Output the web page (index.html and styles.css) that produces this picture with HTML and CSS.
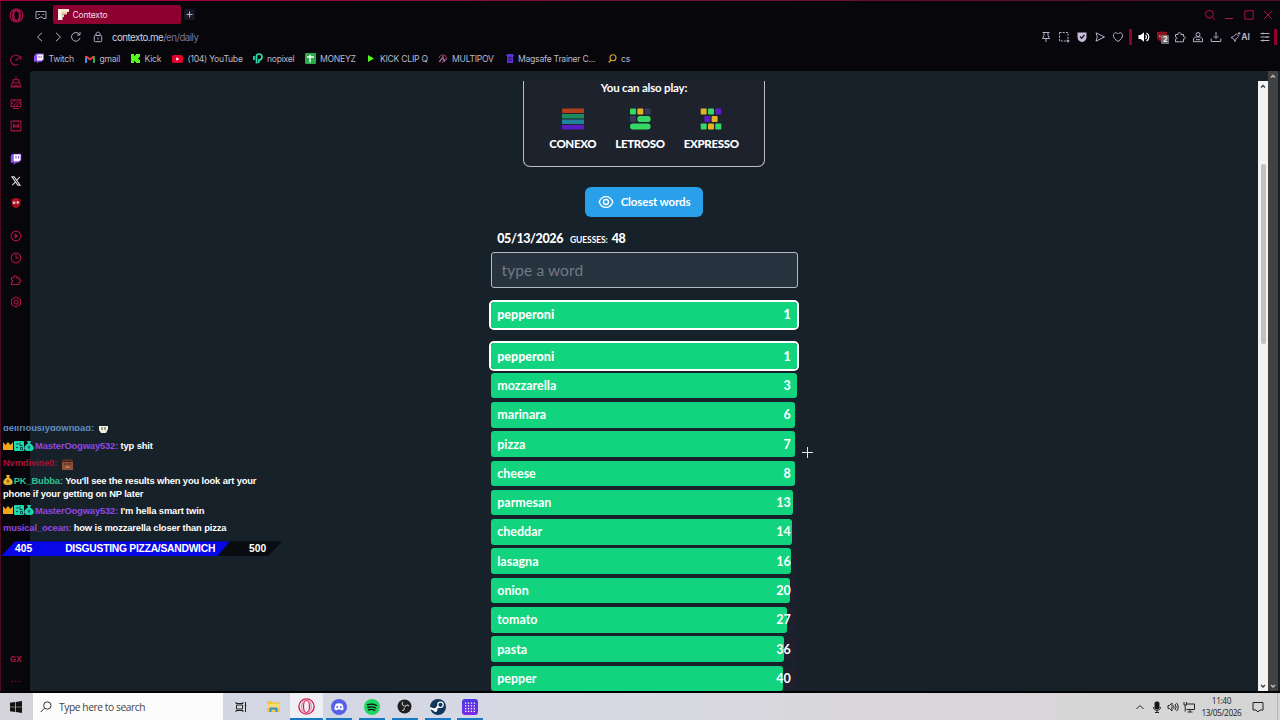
FILE: index.html
```
<!DOCTYPE html>
<html lang="en">
<head>
    <meta charset="UTF-8">
    <meta name="viewport" content="width=device-width, initial-scale=1.0">
    <title>Contexto</title>
    <link rel="stylesheet" href="styles.css">
</head>
<body>

    <div class="browser">
        <div class="sidebar">
            <div class="side-logo">
                <svg class="red" width="15" height="15" viewBox="0 0 16 16"><circle cx="8" cy="8" r="6.8"/><ellipse cx="8" cy="8" rx="3" ry="5.2"/><path d="M6 2.5C3 5 3 11 6 13.5M10 2.5c3 2.500 3 8.500 0 11"/></svg>
            </div>
            <div class="side-group">
                <svg class="red" viewBox="0 0 16 16"><path d="M11.500 3A6.500 6.500 0 1 0 11 13.500M7.500 8.500L13 4.500M12 2.500l2.500 1.500v4"/></svg>
                <svg class="red" viewBox="0 0 16 16"><path d="M8 1v4M4 5h8v4H4zM3 9h10l1.500 5.500H1.500zM5.500 12v2.500M8 11v3.500M10.500 12v2.500"/></svg>
                <svg class="red" viewBox="0 0 16 16"><rect x="1.500" y="2.500" width="13" height="9"/><path d="M2 8l5-5M4 11l8-8M8 11l6-6M4 14h8"/></svg>
                <svg class="red" viewBox="0 0 16 16"><rect x="1.500" y="1.500" width="13" height="13" rx="1"/><path d="M5 11V6l3 3 3-3v5" stroke-width="1.700"/></svg>
            </div>
            <div class="side-group second">
                <svg viewBox="0 0 16 16"><path d="M3 1h12v9l-4 3H8l-3 3v-3H1V4z" fill="#8a4df0"/><path d="M5 2h9v7l-2.500 2H5z" fill="#fff"/><path d="M8 4v3.500M11.500 4v3.500" stroke="#7038c8" stroke-width="1.300"/></svg>
                <svg viewBox="0 0 16 16" fill="none" stroke="#d8d8dc"><path d="M2.500 2.500h3l8 11h-3zM13 2.500L9 7M7 9.500l-4 4" stroke-width="1.400"/></svg>
                <svg viewBox="0 0 16 16"><path d="M8 1l6 2v5c0 4-3 6-6 7-3-1-6-3-6-7V3z" fill="#a80f1c"/><path d="M4.500 6v2.500h2V6M9.500 6v2.500c3 0 3-2.500 0-2.500" fill="none" stroke="#fff" stroke-width="1.200"/></svg>
            </div>
            <div class="side-group third">
                <svg class="red" viewBox="0 0 16 16"><circle cx="8" cy="8" r="6.500"/><path d="M6.800 5.800v4.400L10 8z" fill="#b01345"/></svg>
                <svg class="red" viewBox="0 0 16 16"><circle cx="8" cy="8" r="6.500"/><path d="M8 3.500V8h3.500"/></svg>
                <svg class="red" viewBox="0 0 16 16"><path d="M2 5h3.500C4 1.500 10 1.500 9 5h3v2.500c3.500 0 3.500 3.500 0 3.500v3H2v-3c2.500 0 2.500-3 0-3z"/></svg>
                <svg class="red" viewBox="0 0 16 16"><path d="M8 1.200l6 3.400v6.800l-6 3.400-6-3.400V4.600z"/><circle cx="8" cy="8" r="2.800"/></svg>
            </div>
            <div class="side-bottom">
                <span class="gx">GX</span>
                <span class="dots">...</span>
            </div>
        </div>

        <div class="main">
            <div class="tab-strip">
                <svg class="pad" width="12" height="10" viewBox="0 0 12 10"><path d="M1 1.500h10v7H8.200L7 7H5L3.800 8.500H1z"/><path d="M3 4.500h1.500M7.500 4.500H9"/></svg>
                <div class="tab">
                    <svg width="11" height="11" viewBox="0 0 11 11"><path d="M0 0h11v3H0z" fill="#f5ead0"/><path d="M0 3h9v2.500H0z" fill="#f3c9a4"/><path d="M0 5.500h6V8H0z" fill="#bfe6cf"/><path d="M0 0h3.500v11H0zM0 8h4.500v3H0z" fill="#fbf3e5"/></svg>
                    Contexto
                </div>
                <div class="new-tab"><svg width="11" height="11" viewBox="0 0 11 11"><path d="M5.500 2.500v6M2.500 5.500h6" stroke="#b9b3cc"/></svg></div>
                <div class="window-buttons">
                    <svg class="red" viewBox="0 0 12 12"><circle cx="5.500" cy="5.300" r="3.900"/><path d="M8.300 8.200l3 3"/></svg>
                    <svg class="red" viewBox="0 0 12 12"><path d="M2 9.500h8"/></svg>
                    <svg class="red" viewBox="0 0 12 12"><path d="M1.800 1.800h8.400v8.400H1.800z"/></svg>
                    <svg class="red" viewBox="0 0 12 12"><path d="M2 2l8 8M10 2l-8 8"/></svg>
                </div>
            </div>

            <div class="address-bar">
                <svg viewBox="0 0 12 12"><path d="M8 1.800L3.500 6 8 10.200"/></svg>
                <svg viewBox="0 0 12 12"><path d="M4 1.800L8.500 6 4 10.200"/></svg>
                <svg viewBox="0 0 12 12"><path d="M9.300 3.300A4.300 4.300 0 1 0 10 7M10 1v3H7"/></svg>
                <svg class="lock" viewBox="0 0 12 12"><rect x="2.300" y="4.500" width="7.400" height="6.200" rx="1"/><path d="M4 4.500V3c0-2.400 4-2.400 4 0v1.500M6 6.500v2"/></svg>
                <div class="url">contexto.me<span>/en/daily</span></div>
                <div class="tools">
                    <svg viewBox="0 0 12 12"><path d="M2.500 1.500h7M4 1.500v3L2.500 7.500h7L8 4.500v-3M6 7.500V11"/></svg>
                    <svg viewBox="0 0 12 12"><path d="M1.500 1.500h8.500v8.500H1.500z" stroke-dasharray="2 1.200"/><path d="M10 8.500v3M8.500 10h3"/></svg>
                    <svg viewBox="0 0 12 12"><path d="M1.500 1.500h9V6c0 3-2 4.500-4.500 5C3.500 10.500 1.500 9 1.500 6z" fill="#c6bcdc" stroke="none"/><path d="M4 5.500l1.700 1.800L8.500 4" stroke="#17131f" stroke-width="1.300"/></svg>
                    <svg viewBox="0 0 12 12"><path d="M2 1.800L10.500 6 2 10.200 3.300 6z"/></svg>
                    <svg viewBox="0 0 12 12"><path d="M6 10.500C-1 6 1.500 1.500 4 1.800c1.200.1 2 1.200 2 1.200s.8-1.100 2-1.200c2.500-.3 5 4.200-2 8.700z"/></svg>
                    <span class="divider"></span>
                    <svg class="sound" viewBox="0 0 12 12"><path d="M.5 4h2.200L6 1.200v9.600L2.700 8H.5z" fill="#fff" stroke="none"/><path d="M7.500 4c1.300 1.200 1.300 2.800 0 4M8.500 2c3.200 2 3.200 6 0 8" stroke="#fff" stroke-width="1.200"/></svg>
                    <div class="blocker">
                        <svg viewBox="0 0 12 12"><path d="M1 1l5-.5L11 1v5c0 3-3 4-5 5-2-1-5-2-5-5z" fill="#8d1020" stroke="none"/><path d="M3.500 4v2h1.700V4M7 4v2h1.500" stroke="#c96a6a"/></svg>
                        <span class="badge">2</span>
                    </div>
                    <svg viewBox="0 0 12 12"><path d="M1.500 3.500H4C3 1 7.800 1 7 3.500h2.500v2c2.500 0 2.500 2.500 0 2.500v2.800h-8V8.200c2 0 2-2.200 0-2.200z"/></svg>
                    <svg viewBox="0 0 12 12"><circle cx="6" cy="3.500" r="2"/><path d="M3.500 6h5l2 2v2.700h-9V8zM4 8.700h4"/></svg>
                    <svg viewBox="0 0 12 12"><path d="M6 1v6M3.500 5L6 7.500 8.500 5M1.200 7.500v3h9.600v-3"/></svg>
                    <div class="ai"><svg viewBox="0 0 12 12"><path d="M1 6.500l3-1 3-3L9.500 5l-3 3-1 3L4 8zM10 .5v3M8.500 2h3"/></svg>AI</div>
                    <svg class="menu" viewBox="0 0 12 12"><path d="M1.500 2.500h9M1.500 6h9M1.500 9.500h9M4 1.500v2M8 5v2M4 8.500v2"/></svg>
                    <span class="divider last"></span>
                </div>
            </div>

            <div class="bookmarks">
                <a><svg width="10" height="11" viewBox="0 0 16 16"><path d="M3 0h13v10l-4 3H8l-3 3v-3H0V4z" fill="#8a4df0"/><path d="M5 1.500h9.500V9l-2.500 2H5z" fill="#fff"/><path d="M8 4v3.500M11.500 4v3.500" stroke="#7038c8" stroke-width="1.300"/></svg><span>Twitch</span></a>
                <a><svg width="10" height="8" viewBox="0 0 10 8"><path d="M1 8V1" stroke="#4285f4" stroke-width="2"/><path d="M9 8V1" stroke="#34a853" stroke-width="2"/><path d="M1 1.200l4 3.300 4-3.300" fill="none" stroke="#ea4335" stroke-width="2"/></svg><span>gmail</span></a>
                <a><svg width="9" height="9" viewBox="0 0 9 9"><path d="M0 0h3v2h1V1h1V0h4v3H8v1H7v1h1v1h1v3H5V8H4V7H3v2H0z" fill="#53fc18"/></svg><span>Kick</span></a>
                <a><svg width="11" height="8" viewBox="0 0 11 8"><rect width="11" height="8" rx="2" fill="#e4002b"/><path d="M4.300 2.300v3.400L7.300 4z" fill="#fff"/></svg><span>(104) YouTube</span></a>
                <a><svg width="10" height="11" viewBox="0 0 10 11"><path d="M1 3v4M3.500 10.500V3c0-1.500 1-2 2.500-2 4 0 4 6 0 6L5.500 10" fill="none" stroke="#2fe0ae" stroke-width="1.700"/></svg><span>nopixel</span></a>
                <a><svg width="11" height="11" viewBox="0 0 11 11"><rect width="11" height="11" rx="1" fill="#2ea84c"/><path d="M2 4h7M5 1.800v7.600" stroke="#fff" stroke-width="1.300"/></svg><span>MONEYZ</span></a>
                <a><svg width="10" height="9" viewBox="0 0 10 9"><path d="M2 1l6 3.500L2 8z" fill="#53fc18"/></svg><span>KICK CLIP Q</span></a>
                <a><svg width="10" height="10" viewBox="0 0 10 10"><path d="M1 4C2 0 7 0 9 4M2 8l3-6 1 5 3-2M4 9l4-5" fill="none" stroke="#b64576"/><path d="M1 8l3-4 3 4" fill="none" stroke="#8b8bc0"/></svg><span>MULTIPOV</span></a>
                <a><svg width="8" height="9" viewBox="0 0 8 9"><path d="M1 0h6v1h1v1H7v7H1V2H0V1h1z" fill="#5a2ed0"/><path d="M2.500 3.500h3M2.500 6h3" stroke="#1b0d4a"/></svg><span>Magsafe Trainer C...</span></a>
                <a><svg width="9" height="9" viewBox="0 0 9 9"><circle cx="5" cy="3.700" r="3" fill="none" stroke="#d9a52a" stroke-width="1.100"/><path d="M3 6L.8 8.500" stroke="#d9a52a" stroke-width="1.300"/></svg><span>cs</span></a>
            </div>

            <div class="viewport">
                <div class="frame">
                    <div class="page">
                        <div class="also-play">
                            <div class="also-title">You can also play:</div>
                            <div class="games">
                                <div class="game">
                                    <svg width="22" height="22" viewBox="0 0 22 22"><path d="M0 1.500Q0 .5 1 .5h20q1 0 1 1V5H0z" fill="#b23e1c"/><path d="M0 6h22v4.500H0z" fill="#1c8a5d"/><path d="M0 11.500h22V16H0z" fill="#21809a"/><path d="M0 17h22v3.500q0 1-1 1H1q-1 0-1-1z" fill="#5a1cc4"/></svg>
                                    <span>CONEXO</span>
                                </div>
                                <div class="game">
                                    <svg width="22" height="22" viewBox="0 0 22 22"><rect x="1" y=".5" width="6" height="6" rx="1" fill="#35d765"/><rect x="8.300" y=".5" width="6" height="6" rx="1" fill="#e0b224"/><rect x="15.600" y=".5" width="6" height="6" rx="1" fill="#38395a"/><rect x="1" y="8" width="6" height="6" rx="1" fill="#38395a"/><rect x="8.300" y="8" width="13.300" height="6" rx="2.500" fill="#35d765"/><rect x="1" y="15.500" width="20.600" height="6" rx="3" fill="#35d765"/></svg>
                                    <span>LETROSO</span>
                                </div>
                                <div class="game">
                                    <svg width="22" height="22" viewBox="0 0 22 22"><g fill="#e0b224"><rect x=".7" y=".5" width="6" height="6" rx=".8"/><rect x="11.600" y="8" width="6" height="6" rx=".8"/><rect x="8" y="15.500" width="6" height="6" rx=".8"/></g><g fill="#35d765"><rect x="8" y=".5" width="6" height="6" rx=".8"/><rect x=".7" y="15.500" width="6" height="6" rx=".8"/><rect x="15.300" y="15.500" width="6" height="6" rx=".8"/></g><g fill="#5a1cc4"><rect x="15.300" y=".5" width="6" height="6" rx=".8"/><rect x="4.300" y="8" width="6" height="6" rx=".8"/></g></svg>
                                    <span>EXPRESSO</span>
                                </div>
                            </div>
                        </div>

                        <button class="closest"><svg width="16" height="14" viewBox="0 0 16 14"><path d="M1.200 7C4-.2 12 -.2 14.800 7 12 14.200 4 14.200 1.200 7z" fill="none" stroke="#fff" stroke-width="1.400"/><circle cx="8" cy="7" r="2.500" fill="none" stroke="#fff" stroke-width="1.400"/></svg><span>Closest words</span></button>

                        <div class="info"><b class="date">05/13/2026</b><span class="label">GUESSES:</span><b>48</b></div>
                        <input class="word" type="text" placeholder="type a word">

                        <div class="row current last-guess"><div class="bar" style="width: 100%"></div><span>pepperoni</span><span>1</span></div>

                        <div class="rows">
                            <div class="row current"><div class="bar" style="width: 100%"></div><span>pepperoni</span><span>1</span></div>
                            <div class="row"><div class="bar" style="width: 99.8%"></div><span>mozzarella</span><span>3</span></div>
                            <div class="row"><div class="bar" style="width: 99.4%"></div><span>marinara</span><span>6</span></div>
                            <div class="row"><div class="bar" style="width: 99.3%"></div><span>pizza</span><span>7</span></div>
                            <div class="row"><div class="bar" style="width: 99.1%"></div><span>cheese</span><span>8</span></div>
                            <div class="row"><div class="bar" style="width: 98.6%"></div><span>parmesan</span><span>13</span></div>
                            <div class="row"><div class="bar" style="width: 98.4%"></div><span>cheddar</span><span>14</span></div>
                            <div class="row"><div class="bar" style="width: 98.1%"></div><span>lasagna</span><span>16</span></div>
                            <div class="row"><div class="bar" style="width: 97.6%"></div><span>onion</span><span>20</span></div>
                            <div class="row"><div class="bar" style="width: 96.8%"></div><span>tomato</span><span>27</span></div>
                            <div class="row"><div class="bar" style="width: 95.7%"></div><span>pasta</span><span>36</span></div>
                            <div class="row"><div class="bar" style="width: 95.3%"></div><span>pepper</span><span>40</span></div>
                        </div>
                    </div>
                    <div class="scrollbar light">
                        <svg viewBox="0 0 10 10"><path d="M3 6.500l2-2 2 2"/></svg>
                        <div class="thumb"></div>
                        <svg viewBox="0 0 10 10"><path d="M3 4l2 2 2-2"/></svg>
                    </div>
                </div>
                <div class="scrollbar dark">
                    <svg viewBox="0 0 10 10"><path d="M3 6.500l2-2 2 2"/></svg>
                    <svg viewBox="0 0 10 10"><path d="M3 4l2 2 2-2"/></svg>
                </div>
            </div>
        </div>
    </div>

    <div class="taskbar">
        <div class="start"><svg width="12" height="12" viewBox="0 0 12 12"><path d="M0 1.700L5.300 1v4.700H0zM6 .9L12 0v5.700H6zM0 6.300h5.300V11L0 10.300zM6 6.300h6V12l-6-.9z" fill="#111"/></svg></div>
        <div class="search"><svg width="12" height="12" viewBox="0 0 12 12"><circle cx="7.300" cy="4.500" r="3.700" fill="none" stroke="#333"/><path d="M4.500 7.200L.8 11" stroke="#333"/></svg>Type here to search</div>
        <div class="apps">
            <div class="app"><svg width="12" height="12" viewBox="0 0 12 12"><path d="M1 1v1.500h7V1M1 11V9.500h7V11M1.500 4h6v4h-6zM10.500 1v10M9.800 4.500h1.500" fill="none" stroke="#222"/></svg></div>
            <div class="app"><svg width="15" height="13" viewBox="0 0 15 13"><path d="M1 1h5l1 1.500h7V12H1z" fill="#f2c744"/><path d="M1 4h13v4H1z" fill="#fbdc73"/><path d="M3.500 12V7.500h8V12H9.500V9.500h-4V12z" fill="#3c8fc9"/></svg></div>
            <div class="app open active"><svg width="17" height="17" viewBox="0 0 17 17"><circle cx="8.500" cy="8.500" r="7.600" fill="none" stroke="#cf2553" stroke-width="1.400"/><ellipse cx="8.500" cy="8.500" rx="3" ry="6" fill="none" stroke="#cf2553" stroke-width="1.200"/><path d="M6.500 2.500C2.800 4.500 2.800 12.500 6.500 14.500M10.500 2.500c3.700 2 3.700 10 0 12" fill="none" stroke="#e0748f"/></svg></div>
            <div class="app open"><svg width="16" height="16" viewBox="0 0 16 16"><circle cx="8" cy="8" r="8" fill="#5661e8"/><path d="M5 4.700Q8 3.800 11 4.700q1.600 2.300 1.700 5.500-1 1-2.500 1.200l-.6-1H6.400l-.6 1Q4.300 11.200 3.300 10.200 3.400 7 5 4.700z" fill="#fff"/><circle cx="6.200" cy="8" r="1" fill="#5661e8"/><circle cx="9.800" cy="8" r="1" fill="#5661e8"/></svg></div>
            <div class="app open"><svg width="16" height="16" viewBox="0 0 16 16"><circle cx="8" cy="8" r="8" fill="#1ed760"/><path d="M3.500 5.700c3.500-1 6.500-.6 9 .8M4 8.300c3-.8 5.500-.5 7.700.7M4.500 10.700c2.500-.6 4.500-.3 6.200.6" fill="none" stroke="#111" stroke-width="1.400" stroke-linecap="round"/></svg></div>
            <div class="app open"><svg width="15" height="15" viewBox="0 0 15 15"><circle cx="7.500" cy="7.500" r="7" fill="#1f1f22"/><path d="M7.500 7C5 6.500 4.500 4.500 6 3M8 8c.5-2 2.500-2.500 4-1M7 8.500c1 1.500 0 3-2 3" fill="none" stroke="#bbb" stroke-width="1.100"/></svg></div>
            <div class="app open"><svg width="16" height="16" viewBox="0 0 16 16"><circle cx="8" cy="8" r="8" fill="#12355a"/><path d="M0 9l5 2 5-5.500" fill="none" stroke="#fff" stroke-width="2.200"/><circle cx="10.500" cy="5.800" r="2.700" fill="#12355a" stroke="#fff" stroke-width="1.200"/><circle cx="5.500" cy="11" r="1.900" fill="#fff"/></svg></div>
            <div class="app open"><svg width="16" height="16" viewBox="0 0 16 16"><defs><linearGradient id="grid-bg" x1="0" y1="0" x2="0" y2="1"><stop offset="0" stop-color="#4a37e8"/><stop offset="1" stop-color="#7c2be0"/></linearGradient></defs><rect width="16" height="16" rx="3" fill="url(#grid-bg)"/><path d="M3 4.200h11M3 6.900h11M3 9.600h11M3 12.300h11" stroke="#fff" stroke-width="1.300" stroke-dasharray="1.300 1.600"/></svg></div>
        </div>
        <div class="tray">
            <svg viewBox="0 0 12 12"><path d="M2.500 8L6 4.500 9.500 8"/></svg>
            <svg viewBox="0 0 12 12"><rect x="4" y="1" width="4" height="7" rx="1" fill="#111"/><path d="M2.500 6c0 4.500 7 4.500 7 0M6 9.500V12M4 11.500h4"/></svg>
            <svg viewBox="0 0 12 12"><path d="M1 4.500h1.500L5 2v8L2.500 7.500H1zM6.500 4.500q1.200 1.500 0 3M8 3q2.300 3 0 6M9.500 1.800q3.500 4.200 0 8.400"/></svg>
            <svg viewBox="0 0 12 12"><path d="M4 3h7.500v5.500h-8M7 8.500V11M4.500 11h5M1 1v3h2.500V1M2.200 4v6.500"/></svg>
            <div class="clock">11:40<br>13/05/2026</div>
            <svg class="note" viewBox="0 0 12 12"><path d="M1 1.500h10v7.500H8L6 11 4 9H1z"/></svg>
            <span class="desktop-edge"></span>
        </div>
    </div>

    <div class="chat">
        <div class="msg cut"><div class="cut-inner"><span class="blue">deliriouslydownbad:</span><svg class="emote" width="9" height="9" viewBox="0 0 9 9"><path d="M0 1h9v4L7 9H2L0 6z" fill="#f3f0dc"/><path d="M3 3v3M6 3v3" stroke="#345c33"/></svg></div></div>
        <div class="msg"><svg class="crown" viewBox="0 0 10 10"><path d="M0 1l2.500 3L5 1l2.500 3L10 1v8H0z" fill="#f5a417"/></svg><svg class="tag" viewBox="0 0 10 10"><rect width="10" height="10" rx="1" fill="#1cd9b2"/><path d="M2 3h2.500M2 6.500h2M6 1.500v3h2.500M6.500 6.500h2v2h-2z" stroke="#10464a" fill="none"/></svg><svg class="bag" viewBox="0 0 10 10"><path d="M3 0h4L6 2.500c5 2.500 5 7.500 0 7.500H4c-5 0-5-5 0-7.500z" fill="#1cd9b2"/><path d="M3.500 6h3M5 4.500v4" stroke="#10464a" stroke-width=".8"/></svg><span class="purple">MasterOogway532:</span> typ shit</div>
        <div class="msg"><span class="crimson">Nvmdivine0:</span><svg class="emote face" width="11" height="11" viewBox="0 0 11 11"><rect width="11" height="11" fill="#8e5038"/><path d="M0 0h11v2.500H0zM2 5h2.500M6.500 5H9" stroke="#40221c" fill="#5c3026"/><path d="M3.500 8h4" stroke="#d7a285"/></svg></div>
        <div class="msg"><svg class="bag" viewBox="0 0 10 10"><path d="M3 0h4L6 2.500c5 2.500 5 7.500 0 7.500H4c-5 0-5-5 0-7.500z" fill="#e9b62c"/><path d="M3.500 6h3M5 4.500v4" stroke="#6d4a07" stroke-width=".8"/></svg><span class="green">PK_Bubba:</span> You'll see the results when you look art your<br>phone if your getting on NP later</div>
        <div class="msg"><svg class="crown" viewBox="0 0 10 10"><path d="M0 1l2.500 3L5 1l2.500 3L10 1v8H0z" fill="#f5a417"/></svg><svg class="tag" viewBox="0 0 10 10"><rect width="10" height="10" rx="1" fill="#1cd9b2"/><path d="M2 3h2.500M2 6.500h2M6 1.500v3h2.500M6.500 6.500h2v2h-2z" stroke="#10464a" fill="none"/></svg><svg class="bag" viewBox="0 0 10 10"><path d="M3 0h4L6 2.500c5 2.500 5 7.500 0 7.500H4c-5 0-5-5 0-7.500z" fill="#1cd9b2"/><path d="M3.500 6h3M5 4.500v4" stroke="#10464a" stroke-width=".8"/></svg><span class="purple">MasterOogway532:</span> I'm hella smart twin</div>
        <div class="msg"><span class="purple">musical_ocean:</span> how is mozzarella closer than pizza</div>
        <div class="goal">
            <div class="goal-fill"><span>405</span><span class="goal-name">DISGUSTING PIZZA/SANDWICH</span></div>
            <span class="goal-end">500</span>
        </div>
    </div>

    <svg class="cursor" width="11" height="11" viewBox="0 0 11 11"><path d="M5.500 0v11M0 5.500h11" stroke="#e4e8ec"/></svg>

</body>
</html>
```

FILE: styles.css
```
* {
    box-sizing: border-box;
}

body {
    margin: 0;
    width: 1280px;
    height: 720px;
    overflow: hidden;
    position: relative;
    display: flex;
    flex-direction: column;
    background: #05050a;
    font-family: 'Inter', sans-serif;
}

svg {
    display: block;
    flex: none;
}

.red {
    fill: none;
    stroke: #b01345;
}

/* browser window */
.browser {
    height: 693px;
    padding-top: 1px;
    display: flex;
    background: linear-gradient(90deg, #a3003c 190px, #7d1233 500px, #4d0c22) top / 100% 1px no-repeat #06060b;
    border-bottom: 2px solid #020203;
}

.sidebar {
    width: 30px;
    height: 690px;
    padding-left: 1px;
    border-left: 1px solid #4d0c22;
    display: flex;
    flex-direction: column;
    align-items: center;
}

.side-logo {
    padding-top: 7px;
    height: 48px;
}

.side-logo svg {
    stroke-width: 1.3;
}

.side-group {
    display: flex;
    flex-direction: column;
}

.side-group svg {
    width: 12px;
    height: 12px;
    margin: 5px 0;
}

.side-group .red {
    stroke-width: 1.4;
}

.second {
    margin-top: 11px;
}

.third {
    margin-top: 11px;
}

.side-bottom {
    margin-top: auto;
    height: 43px;
    width: 26px;
    display: flex;
    flex-direction: column;
    align-items: center;
    color: #b01345;
    font-size: 8px;
    font-weight: 700;
    line-height: 22px;
}

.dots {
    letter-spacing: 1px;
    line-height: 18px;
}

.main {
    width: 1250px;
    display: flex;
    flex-direction: column;
}

.tab-strip {
    height: 26px;
    display: flex;
    align-items: center;
    padding: 1px 5px 0 5px;
}

.pad {
    fill: none;
    stroke: #a7a3b5;
}

.tab {
    width: 128px;
    height: 19px;
    margin-left: 6px;
    padding-left: 5px;
    border-radius: 2px;
    background: #8e0030;
    color: #f0dfe6;
    display: flex;
    align-items: center;
    gap: 3.5px;
    font-size: 8.5px;
    letter-spacing: -0.2px;
}

.new-tab {
    width: 11px;
    height: 11px;
    margin-left: 3px;
    background: #1a1826;
    border-radius: 2px;
}

.window-buttons {
    margin-left: auto;
    display: flex;
    gap: 7.5px;
    padding-right: 1px;
}

.window-buttons svg {
    width: 12px;
    height: 12px;
}

.address-bar {
    height: 20px;
    display: flex;
    align-items: center;
    padding-left: 4px;
}

.address-bar svg {
    width: 12px;
    height: 12px;
    margin-right: 6px;
    fill: none;
    stroke: #b5afc6;
}

.address-bar svg.lock {
    margin-left: 4px;
    margin-right: 8px;
}

.url {
    color: #d5d1df;
    font-size: 9.7px;
    letter-spacing: -0.52px;
}

.url span {
    color: #7d7598;
}

.tools {
    margin-left: auto;
    display: flex;
    align-items: center;
}

.divider {
    width: 3px;
    height: 16px;
    margin: 0 6px 0 -1px;
    background: #8e0030;
}

.divider.last {
    margin: 0 3px 0 -1px;
}

.blocker {
    position: relative;
}

.badge {
    position: absolute;
    left: 5px;
    top: 4px;
    width: 8px;
    height: 9px;
    border-radius: 1px;
    background: #6b6d72;
    color: #fff;
    font-size: 7px;
    font-weight: 700;
    line-height: 9px;
    text-align: center;
}

.ai {
    display: flex;
    align-items: center;
    margin: 0 9px 0 2px;
    color: #b5afc6;
    font-size: 8.5px;
    font-weight: 700;
}

.address-bar .ai svg {
    width: 11px;
    margin-right: 0;
}

.address-bar svg.menu {
    margin-right: 4px;
}

.bookmarks {
    height: 24px;
    padding: 0 0 1px 4px;
    display: grid;
    grid-template-columns: 51px 46px 41px 80.5px 52px 61px 72px 68px 102px 60px;
    align-items: center;
    color: #bdb9c6;
    font-size: 8.6px;
    letter-spacing: -0.25px;
    white-space: nowrap;
}

.bookmarks a {
    display: flex;
    align-items: center;
    gap: 4.5px;
}

.viewport {
    height: 620px;
    display: flex;
    background: #172129;
    border-top-left-radius: 3px;
}

.frame {
    width: 1238px;
    margin-top: 10px;
    height: 610px;
    display: flex;
    overflow: hidden;
}

.page {
    width: 1228px;
    display: flex;
    flex-direction: column;
    align-items: center;
    font-family: 'Lato', 'Open Sans', sans-serif;
    color: #fff;
}

.scrollbar {
    display: flex;
    flex-direction: column;
    justify-content: space-between;
    fill: none;
}

.scrollbar svg {
    width: 10px;
    height: 10px;
    stroke-width: 1.5;
}

.light {
    width: 10px;
    background: #f3f3f3;
    stroke: #444;
}

.thumb {
    width: 5px;
    height: 180px;
    margin: 73px 0 auto 2.5px;
    border-radius: 2px;
    background: #c1c1c1;
}

.dark {
    width: 10px;
    background: #424242;
    stroke: #bbb;
}

/* game page */
.also-play {
    flex: none;
    width: 242px;
    height: 86px;
    border: 1px solid #b9bec6;
    border-top: none;
    border-radius: 0 0 7px 7px;
    background: #1e222d;
}

.also-title {
    margin-top: -2px;
    text-align: center;
    font-size: 11.5px;
    font-weight: 700;
    line-height: 18px;
    letter-spacing: -0.2px;
}

.games {
    margin-top: 11px;
    padding: 0 23px;
    display: flex;
    justify-content: center;
    gap: 19px;
}

.game {
    display: flex;
    flex-direction: column;
    align-items: center;
    font-size: 11.5px;
    font-weight: 900;
    line-height: 16px;
    gap: 6px;
    letter-spacing: -0.35px;
}

.closest {
    flex: none;
    width: 118px;
    height: 30px;
    margin-top: 19.5px;
    border: none;
    border-radius: 6px;
    background: #29a0e9;
    color: #fff;
    display: flex;
    align-items: center;
    justify-content: center;
    gap: 7px;
    font-family: inherit;
    font-size: 11.5px;
    font-weight: 700;
    letter-spacing: -0.15px;
    padding: 0;
}

.info {
    flex: none;
    width: 293.6px;
    height: 18px;
    margin-top: 14.5px;
    display: flex;
    align-items: baseline;
    font-size: 12.5px;
    font-weight: 700;
    letter-spacing: -0.4px;
}

.info b {
    font-weight: 900;
}

.info .label {
    margin: 0 4px 0 7px;
    font-size: 8.5px;
    letter-spacing: -0.1px;
}

.word {
    flex: none;
    width: 307px;
    height: 36px;
    margin-top: 3px;
    padding: 0 10px;
    border: 1px solid #b4babf;
    border-radius: 3px;
    background: #283340;
    font-family: inherit;
    font-size: 15.5px;
    letter-spacing: 0.1px;
}

.word::placeholder {
    color: #727981;
}

.row {
    flex: none;
    position: relative;
    width: 306.6px;
    height: 25.6px;
    padding: 0 6.5px;
    border-radius: 3px;
    background: #1e212d;
    display: flex;
    justify-content: space-between;
    align-items: center;
    font-size: 12.5px;
    font-weight: 700;
}

.row span {
    position: relative;
}

.bar {
    position: absolute;
    left: 0;
    top: 0;
    height: 100%;
    border-radius: 3px;
    background: #12d47e;
}

.current {
    box-shadow: 0 0 0 2px #fff;
    font-weight: 900;
}

.last-guess {
    margin-top: 14px;
}

.rows {
    margin-top: 15.7px;
    display: flex;
    flex-direction: column;
    gap: 3.73px;
}

/* stream chat overlay */
.chat {
    position: absolute;
    left: 3px;
    top: 426px;
    width: 285px;
    color: #fff;
    font-family: 'Liberation Sans', Arial, sans-serif;
    font-size: 9.4px;
    font-weight: 700;
    line-height: 13px;
    letter-spacing: -0.15px;
}

.msg {
    margin-bottom: 4.3px;
    white-space: nowrap;
}

.msg svg {
    display: inline-block;
    vertical-align: -1.5px;
}

.msg .crown, .msg .tag, .msg .bag {
    width: 10px;
    height: 10px;
    margin-right: 0.7px;
}

.msg .emote {
    margin-left: 5px;
}

.msg .face {
    margin: -2px 0 -1px 5px;
    vertical-align: -3px;
}

.msg.cut {
    height: 7px;
    margin-bottom: 6px;
    overflow: hidden;
}

.cut-inner {
    margin-top: -5px;
    letter-spacing: 0;
}

.blue { color: #5f8fc4; }
.purple { color: #9147e0; }
.crimson { color: #ad0f35; }
.green { color: #2bc493; }

.goal {
    width: 281px;
    height: 15px;
    margin: 7px 0 0 -2px;
    display: flex;
    align-items: center;
    background: #080c10;
    clip-path: polygon(14px 0, 100% 0, 267px 100%, 0 100%);
    font-size: 10.3px;
    letter-spacing: 0;
}

.goal-fill {
    width: 229px;
    height: 15px;
    line-height: 15px;
    padding-left: 14px;
    background: #0707e8;
    clip-path: polygon(0 0, 100% 0, 216px 100%, 0 100%);
    display: flex;
    gap: 33px;
    white-space: nowrap;
}

.goal-name {
    letter-spacing: -0.25px;
}

.goal-end {
    margin-left: 19px;
}

/* taskbar */
.taskbar {
    height: 27px;
    display: flex;
    background: linear-gradient(90deg, #d0d4e2, #d6d9e4 40%, #dad7da 70%, #d5d5d5);
    font-family: 'Open Sans', sans-serif;
    color: #222;
}

.start {
    width: 33px;
    padding: 8px 0 0 10px;
    background: #d3d3d9;
}

.search {
    width: 190px;
    padding-left: 7px;
    background: #fcfcfd;
    color: #444;
    display: flex;
    align-items: center;
    gap: 7px;
    font-size: 10.2px;
    letter-spacing: -0.4px;
}

.apps {
    display: flex;
    padding-left: 1.5px;
}

.app {
    width: 32.8px;
    display: flex;
    align-items: center;
    justify-content: center;
    background-repeat: no-repeat;
}

.open {
    background-image: linear-gradient(#1a79c4, #1a79c4);
    background-size: 26px 2px;
    background-position: 50% 100%;
}

.active {
    background-color: #eeeff4;
    background-size: 100% 2px;
}

.tray {
    margin-left: auto;
    display: flex;
    align-items: center;
    gap: 4.3px;
}

.tray svg {
    width: 12px;
    height: 12px;
    fill: none;
    stroke: #222;
}

.clock {
    width: 44px;
    text-align: center;
    font-size: 8.3px;
    line-height: 12px;
    letter-spacing: -0.4px;
}

.tray .note {
    margin: 0 9px 0 4px;
}

.desktop-edge {
    width: 3px;
    height: 27px;
    border-left: 1px solid #b5b5b8;
}

.cursor {
    position: absolute;
    left: 802px;
    top: 447px;
}
```
